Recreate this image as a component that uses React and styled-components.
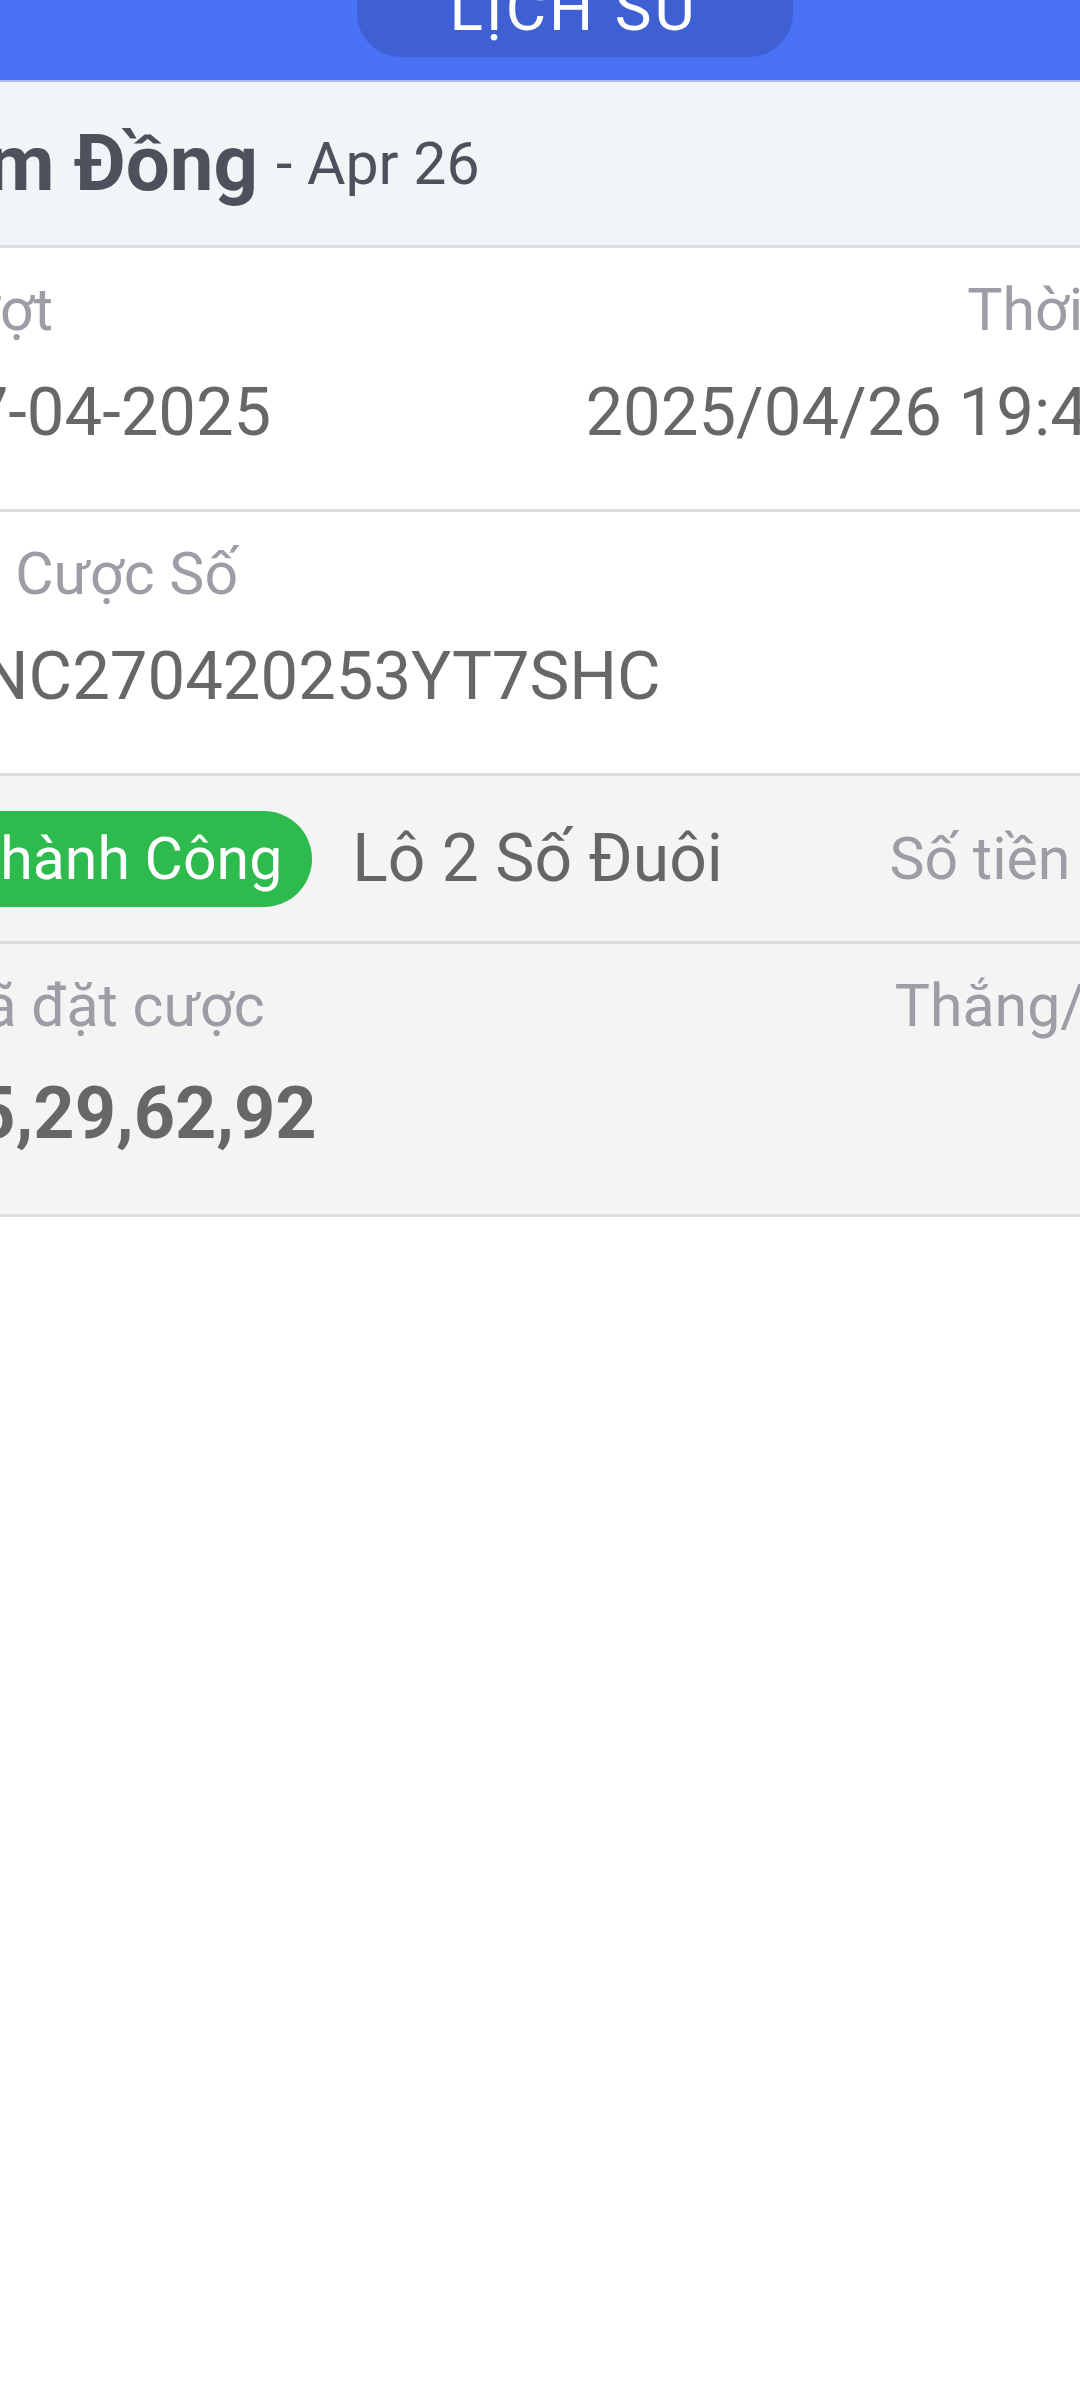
import React from "react";
import styled, { createGlobalStyle } from "styled-components";

const Global = createGlobalStyle`
  *, *::before, *::after { box-sizing: border-box; }
  html, body { margin: 0; padding: 0; background: #ffffff; }
  body { font-family: Roboto, "Noto Sans", "Liberation Sans", sans-serif; }
`;

const Viewport = styled.div`
  width: 1080px;
  min-height: 2400px;
  overflow: hidden;
  background: #ffffff;
`;

const Sheet = styled.div`
  width: 1350px;
  margin: -40px 0 0 -100px;
  display: flex;
  flex-direction: column;
`;

const Header = styled.header`
  height: 122px;
  background: #4a72f5;
  border-bottom: 2px solid #a9bcf1;
  display: flex;
  justify-content: center;
  align-items: flex-start;
`;

const HistoryButton = styled.button`
  width: 436px;
  height: 97px;
  border: none;
  border-radius: 44px;
  background: #3f60d3;
  color: #ffffff;
  font-family: Roboto, sans-serif;
  font-size: 62px;
  letter-spacing: 3px;
  line-height: 1;
  padding: 0;
  display: flex;
  align-items: center;
  justify-content: center;
`;

const TitleBar = styled.div`
  height: 166px;
  background: #f2f5f7;
  border-bottom: 3px solid #dcdedf;
  display: flex;
  align-items: center;
  padding: 0 33px 0 3px;
  color: #4d515b;
`;

const Province = styled.span`
  font-size: 78px;
  font-weight: 700;
`;

const DrawDate = styled.span`
  font-size: 59px;
  font-weight: 400;
  margin-left: 18px;
`;

const InfoRow = styled.div`
  display: flex;
  justify-content: space-between;
  padding: 27px 33px 57px;
  background: ${(p) => (p.$shaded ? "#f4f4f4" : "#ffffff")};
  border-bottom: 3px solid #dddddd;
`;

const Column = styled.div`
  display: flex;
  flex-direction: column;
  gap: 27px;
  align-items: ${(p) => (p.$end ? "flex-end" : "flex-start")};
  white-space: nowrap;
`;

const Label = styled.div`
  font-size: 59px;
  line-height: 70px;
  color: #9c9da5;
`;

const Value = styled.div`
  font-size: ${(p) => (p.$strong ? "72px" : "67px")};
  line-height: ${(p) => (p.$strong ? "86px" : "80px")};
  font-weight: ${(p) => (p.$strong ? 700 : 400)};
  margin-top: ${(p) => (p.$strong ? "3px" : "0")};
  color: #676767;
`;

const BetRow = styled.div`
  height: 168px;
  display: flex;
  align-items: center;
  padding: 0 33px;
  background: #f4f4f4;
  border-bottom: 3px solid #dddddd;
  white-space: nowrap;
`;

const StatusPill = styled.span`
  height: 96px;
  border-radius: 48px;
  background: #2dbb4d;
  color: #ffffff;
  font-size: 59px;
  padding: 0 30px 0 32px;
  display: inline-flex;
  align-items: center;
`;

const BetType = styled.span`
  font-size: 66px;
  color: #666666;
  margin-left: 40px;
`;

const AmountLabel = styled.span`
  font-size: 59px;
  color: #9c9da5;
  margin-left: auto;
`;

export default function App() {
  return (
    <>
      <Global />
      <Viewport>
        <Sheet>
          <Header>
            <HistoryButton>LỊCH SỬ</HistoryButton>
          </Header>
          <TitleBar>
            <Province>Lâm Đồng</Province>
            <DrawDate>- Apr 26</DrawDate>
          </TitleBar>
          <InfoRow>
            <Column>
              <Label>Lượt</Label>
              <Value>27-04-2025</Value>
            </Column>
            <Column $end>
              <Label>Thời Gian</Label>
              <Value>2025/04/26 19:47:38</Value>
            </Column>
          </InfoRow>
          <InfoRow>
            <Column>
              <Label>Vé Cược Số</Label>
              <Value>HNC270420253YT7SHC</Value>
            </Column>
          </InfoRow>
          <BetRow>
            <StatusPill>Thành Công</StatusPill>
            <BetType>Lô 2 Số Đuôi</BetType>
            <AmountLabel>Số tiền cược</AmountLabel>
          </BetRow>
          <InfoRow $shaded>
            <Column>
              <Label>Mã đặt cược</Label>
              <Value $strong>15,29,62,92</Value>
            </Column>
            <Column $end>
              <Label>Thắng/Thua</Label>
            </Column>
          </InfoRow>
        </Sheet>
      </Viewport>
    </>
  );
}
